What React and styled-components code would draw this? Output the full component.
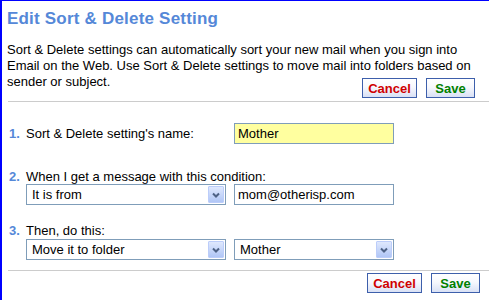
import React from "react";
import styled, { createGlobalStyle } from "styled-components";

const GlobalStyle = createGlobalStyle`
  body {
    margin: 0;
    background: #fff;
    font-family: "Liberation Sans", Arial, sans-serif;
    font-size: 13px;
    color: #000;
  }
`;

const Panel = styled.div`
  box-sizing: border-box;
  height: 300px;
  border-top: 1px solid #0000ff;
  border-left: 2px solid #0000ff;
`;

const Title = styled.h1`
  margin: 0;
  padding: 7px 0 0 5px;
  font-size: 17px;
  line-height: 22px;
  font-weight: bold;
  letter-spacing: 0.2px;
  color: #5588d8;
`;

const Intro = styled.p`
  margin: 0;
  padding: 12px 8px 0 5px;
  line-height: 16px;
`;

const IntroEnd = styled.div`
  display: flex;
  align-items: flex-start;
  justify-content: space-between;
  padding: 0 14px 0 5px;
  line-height: 16px;
`;

const ButtonRow = styled.div`
  display: flex;
  justify-content: flex-end;
  gap: 9px;
  padding-right: ${(p) => p.right || 0}px;
  margin-top: ${(p) => p.top}px;
`;

const Button = styled.button`
  box-sizing: border-box;
  width: ${(p) => p.w}px;
  height: 20px;
  padding: 0;
  border: 1px solid #3d5fab;
  background: linear-gradient(#ffffff 0%, #f7f8fd 45%, #d9e1f5 100%);
  font-family: "Liberation Sans", Arial, sans-serif;
  font-size: 13px;
  font-weight: bold;
  color: ${(p) => p.color};
`;

const Divider = styled.div`
  height: 1px;
  margin-left: 6px;
  margin-top: ${(p) => p.top}px;
  background: #cccccc;
`;

const Step = styled.div`
  display: grid;
  grid-template-columns: 17px 1fr;
  padding-left: 7px;
  margin-top: ${(p) => p.top}px;
`;

const Num = styled.span`
  font-weight: bold;
  color: #5588d8;
  line-height: ${(p) => p.lh}px;
`;

const Body = styled.div`
  display: flex;
  flex-direction: column;
`;

const Line = styled.div`
  display: flex;
  align-items: center;
  gap: 8px;
`;

const Label = styled.span`
  line-height: ${(p) => p.lh}px;
  width: ${(p) => (p.w ? `${p.w}px` : "auto")};
`;

const TextBox = styled.div`
  box-sizing: border-box;
  width: 160px;
  height: 21px;
  border: 1px solid #7f9db9;
  background: ${(p) => (p.highlight ? "#ffff9f" : "#ffffff")};
  padding-left: 3px;
  line-height: 19px;
`;

const Select = styled.div`
  box-sizing: border-box;
  display: flex;
  align-items: center;
  width: ${(p) => p.w}px;
  height: 21px;
  border: 1px solid #7f9db9;
  background: #fff;
  padding: 1px;
`;

const SelectValue = styled.span`
  flex: 1;
  padding-left: 4px;
  line-height: 19px;
`;

const Arrow = styled.span`
  box-sizing: border-box;
  display: flex;
  align-items: center;
  justify-content: center;
  width: 16px;
  height: 17px;
  border: 1px solid #bccdfa;
  border-radius: 1px;
  background: linear-gradient(#dfe8fd, #b0c6f6);
`;

const Chevron = () => (
  <svg width="8" height="6" viewBox="0 0 8 6">
    <path d="M1 1.5 L4 4.5 L7 1.5" fill="none" stroke="#4d6185" strokeWidth="2" />
  </svg>
);

const Dropdown = ({ w, value }) => (
  <Select w={w}>
    <SelectValue>{value}</SelectValue>
    <Arrow>
      <Chevron />
    </Arrow>
  </Select>
);

const Actions = ({ top, right }) => (
  <ButtonRow top={top} right={right}>
    <Button w={55} color="#d00000">Cancel</Button>
    <Button w={49} color="#008000">Save</Button>
  </ButtonRow>
);

export default function App() {
  return (
    <>
      <GlobalStyle />
      <Panel>
        <Title>Edit Sort &amp; Delete Setting</Title>
        <Intro>
          Sort &amp; Delete settings can automatically sort your new mail when you sign into
          Email on the Web. Use Sort &amp; Delete settings to move mail into folders based on
        </Intro>
        <IntroEnd>
          <span>sender or subject.</span>
          <Actions top={4} />
        </IntroEnd>
        <Divider top={3} />

        <Step top={21}>
          <Num lh={21}>1.</Num>
          <Body>
            <Line>
              <Label lh={21} w={200}>Sort &amp; Delete setting's name:</Label>
              <TextBox highlight>Mother</TextBox>
            </Line>
          </Body>
        </Step>

        <Step top={25}>
          <Num lh={15}>2.</Num>
          <Body>
            <Label lh={15}>When I get a message with this condition:</Label>
            <Line>
              <Dropdown w={200} value="It is from" />
              <TextBox>mom@otherisp.com</TextBox>
            </Line>
          </Body>
        </Step>

        <Step top={18}>
          <Num lh={16}>3.</Num>
          <Body>
            <Label lh={16}>Then, do this:</Label>
            <Line>
              <Dropdown w={200} value="Move it to folder" />
              <Dropdown w={160} value="Mother" />
            </Line>
          </Body>
        </Step>

        <Divider top={10} />
        <Actions top={2} right={9} />
      </Panel>
    </>
  );
}
